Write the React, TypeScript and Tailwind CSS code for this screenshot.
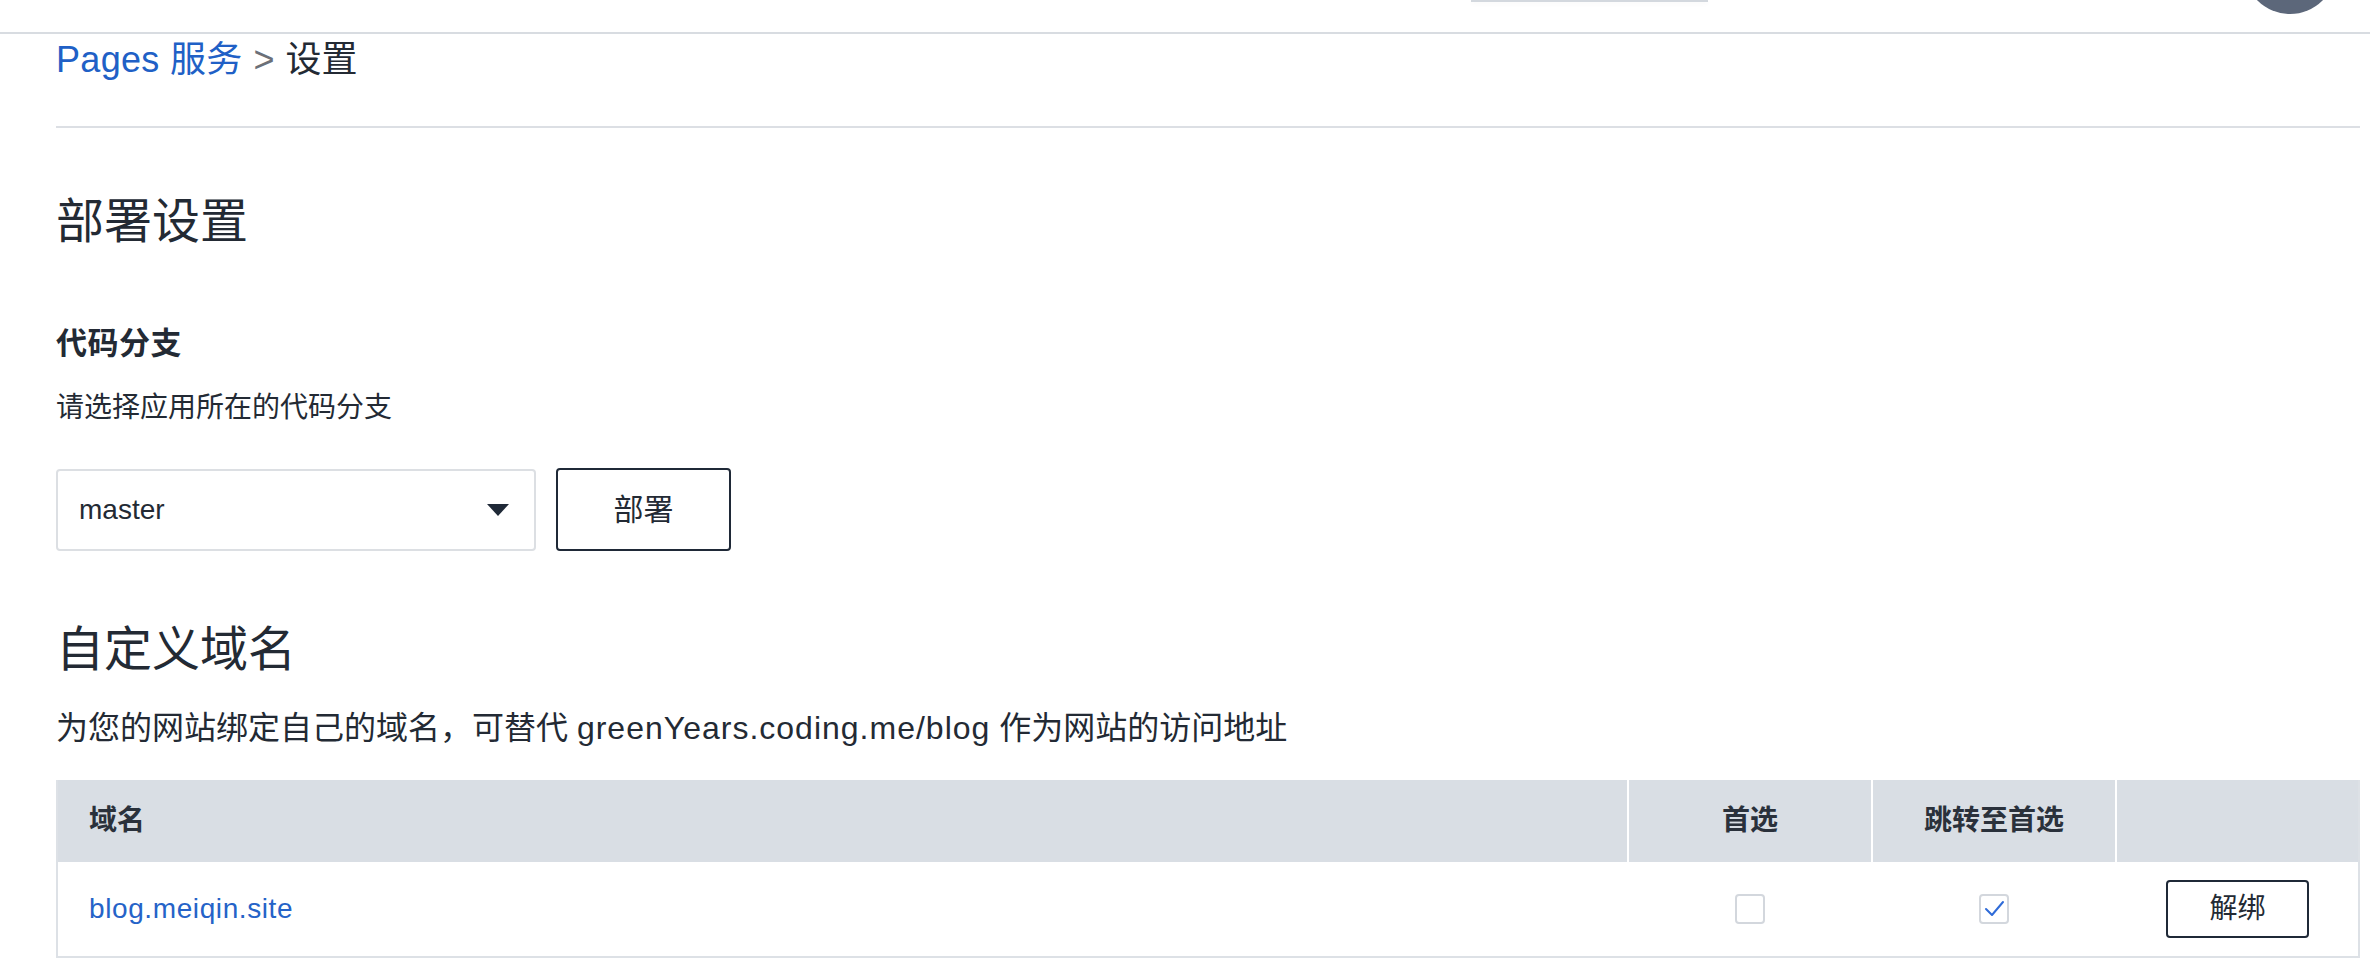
import React from "react";

const font = {
  fontFamily: '"Liberation Sans", "Noto Sans CJK SC", sans-serif',
};

function Checkbox({ checked }: { checked: boolean }) {
  return (
    <div className="w-[30px] h-[30px] rounded-[4px] border-2 border-[#d3d7dd] bg-white flex items-center justify-center">
      {checked && (
        <svg width="26" height="26" viewBox="0 0 26 26" fill="none">
          <polyline
            points="5,13 11,19 22,6"
            stroke="#2f6bd8"
            strokeWidth="2"
            strokeLinecap="round"
            strokeLinejoin="round"
          />
        </svg>
      )}
    </div>
  );
}

export default function App() {
  return (
    <div className="w-[2370px] h-[980px] overflow-hidden bg-white text-[#232a34]" style={font}>
      {/* top header */}
      <div className="h-[34px] border-b-2 border-[#d8dce1] overflow-hidden flex items-start pl-[1471px] pr-[34px]">
        <div className="w-[237px] h-[2px] bg-[#d3d8de] shadow-[0_2px_4px_rgba(0,0,0,0.04)]" />
        <div className="flex-1" />
        <div className="w-[92px] h-[92px] rounded-full bg-[#5c677a] mt-[-78px]" />
      </div>

      <div className="pl-[56px] pr-[10px]">
        {/* breadcrumb */}
        <div className="mt-[4px] pb-[44px] border-b-2 border-[#dcdfe4] text-[36px] leading-[44px] flex items-center">
          <span className="text-[#2060c6] tracking-[0.3px]">Pages 服务</span>
          <span className="text-[#6b7078] mx-[11px]">&gt;</span>
          <span className="text-[#232a34]">设置</span>
        </div>

        {/* 部署设置 */}
        <h1 className="mt-[66px] text-[48px] leading-[56px] font-normal">部署设置</h1>

        <div className="mt-[74px] text-[31px] leading-[40px] font-bold tracking-[0.5px]">代码分支</div>
        <div className="mt-[26px] text-[28px] leading-[36px]">请选择应用所在的代码分支</div>

        <div className="mt-[42px] flex items-center gap-[20px]">
          <div className="w-[480px] h-[82px] border-2 border-[#dcdfe3] rounded-[4px] flex items-center pl-[21px] pr-[25px]">
            <span className="text-[28px] leading-[34px] flex-1">master</span>
            <svg width="22" height="12" viewBox="0 0 22 12">
              <polygon points="0,0 22,0 11,12" fill="#1f2937" />
            </svg>
          </div>
          <button className="w-[175px] h-[83px] border-2 border-[#1f2937] rounded-[4px] bg-white text-[30px] leading-[36px] text-[#232a34]">
            部署
          </button>
        </div>

        {/* 自定义域名 */}
        <h2 className="mt-[71px] text-[48px] leading-[56px] font-normal">自定义域名</h2>
        <div className="mt-[30px] text-[32px] leading-[40px]">
          为您的网站绑定自己的域名，可替代{" "}
          <span className="tracking-[1px]">greenYears.coding.me/blog</span> 作为网站的访问地址
        </div>

        {/* table */}
        <div className="mt-[32px] w-full border-x-2 border-b-2 border-[#dde1e6]">
          <div className="flex h-[82px] bg-[#d9dee4] text-[28px] leading-[34px] font-bold text-[#2a313b]">
            <div className="flex-1 flex items-center pl-[31px]">域名</div>
            <div className="w-[244px] border-l-2 border-white flex items-center justify-center">首选</div>
            <div className="w-[244px] border-l-2 border-white flex items-center justify-center">跳转至首选</div>
            <div className="w-[243px] border-l-2 border-white" />
          </div>
          <div className="flex h-[94px] items-center">
            <div className="flex-1 pl-[31px] text-[28px] leading-[34px] text-[#2563c8] tracking-[0.6px]">blog.meiqin.site</div>
            <div className="w-[244px] flex items-center justify-center pl-[2px]">
              <Checkbox checked={false} />
            </div>
            <div className="w-[244px] flex items-center justify-center pl-[2px]">
              <Checkbox checked={true} />
            </div>
            <div className="w-[243px] flex items-center justify-center pl-[2px]">
              <button className="w-[143px] h-[58px] border-2 border-[#1f2937] rounded-[4px] bg-white text-[28px] leading-[34px] text-[#232a34]">
                解绑
              </button>
            </div>
          </div>
        </div>
      </div>
    </div>
  );
}
